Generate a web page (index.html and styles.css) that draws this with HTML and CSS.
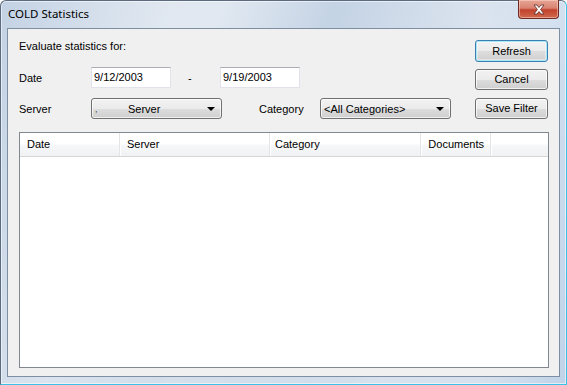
FILE: index.html
```html
<!doctype html>
<html lang="en">
<head>
    <meta charset="UTF-8">
    <title>COLD Statistics</title>
    <link rel="stylesheet" href="styles.css">
</head>
<body>
<div class="window">
    <div class="titlebar">
        <span class="title">COLD Statistics</span>
        <div class="close_btn">
            <svg width="14" height="11" viewBox="0 0 14 11">
                <path d="M2 1 L5 1 L7 3.5 L9 1 L12 1 L8.6 5.5 L12 10 L9 10 L7 7.5 L5 10 L2 10 L5.4 5.5 Z"
                      fill="#fff" stroke="#5a2a24" stroke-width="0.8" stroke-linejoin="round"/>
            </svg>
        </div>
    </div>

    <div class="client">
        <div class="top">
            <div class="filter_form">
                <div class="heading">Evaluate statistics for:</div>
                <div class="form_row date_row">
                    <span class="label">Date</span>
                    <div class="textbox">9/12/2003</div>
                    <span class="dash">-</span>
                    <div class="textbox">9/19/2003</div>
                </div>
                <div class="form_row">
                    <span class="label">Server</span>
                    <div class="combo server_combo">
                        <span class="combo_mark">,</span>
                        <span class="combo_text">Server</span>
                        <span class="combo_arrow"></span>
                    </div>
                    <span class="label category_label">Category</span>
                    <div class="combo category_combo">
                        <span class="combo_text">&lt;All Categories&gt;</span>
                        <span class="combo_arrow"></span>
                    </div>
                </div>
            </div>
            <div class="buttons">
                <div class="btn btn_default">Refresh</div>
                <div class="btn">Cancel</div>
                <div class="btn">Save Filter</div>
            </div>
        </div>

        <div class="list_view">
            <div class="list_header">
                <div class="col col_date">Date</div>
                <div class="col col_server">Server</div>
                <div class="col col_category">Category</div>
                <div class="col col_docs">Documents</div>
                <div class="col col_filler"></div>
            </div>
        </div>
    </div>
</div>
</body>
</html>
```

FILE: styles.css
```css
body {
    margin: 0;
    width: 567px;
    height: 385px;
    overflow: hidden;
    background-color: #ffffff;
    font-family: "Liberation Sans", Arial, sans-serif;
    font-size: 11px;
    color: #000;
}

.window {
    box-sizing: border-box;
    width: 567px;
    height: 385px;
    display: flex;
    flex-direction: column;
    border: 1px solid #5c6b7d;
    border-right-color: #3cc2e8;
    border-bottom-color: #3cc2e8;
    border-radius: 6px 6px 0 0;
    background:
        linear-gradient(115deg, rgba(255, 255, 255, 0) 0%, rgba(255, 255, 255, 0.35) 30%, rgba(255, 255, 255, 0) 45%,
            rgba(255, 255, 255, 0.3) 75%, rgba(255, 255, 255, 0) 100%),
        linear-gradient(to right, #c3d2e4, #d5dfeb 30%, #c4d3e5 60%, #d1dcea 85%, #bfd3e9);
    box-shadow: inset 0 0 0 1px rgba(255, 255, 255, 0.55);
}

.titlebar {
    height: 27px;
    display: flex;
    align-items: flex-start;
}

.title {
    font-family: "Noto Sans", "Open Sans", sans-serif;
    font-size: 11.5px;
    line-height: 16px;
    margin: 5px 0 0 7px;
    color: #000;
}

.close_btn {
    margin: -1px 7px 0 auto;
    width: 41px;
    height: 19px;
    box-sizing: border-box;
    border: 1px solid #6e2a22;
    border-top: none;
    border-radius: 0 0 4px 4px;
    background: linear-gradient(#e6a594 0%, #d98372 45%, #c2422e 55%, #cf6a4d 100%);
    box-shadow: inset 0 0 0 1px rgba(255, 220, 210, 0.5);
    display: flex;
    align-items: center;
    justify-content: center;
}

.client {
    flex: 1;
    margin: 0 6px 7px 6px;
    border: 1px solid #7f8fa3;
    background-color: #f0f0f0;
    padding: 11px 10px 8px 11px;
    display: flex;
    flex-direction: column;
}

.top {
    display: flex;
    justify-content: space-between;
}

.heading {
    line-height: 13px;
    height: 13px;
    margin-bottom: 14px;
}

.form_row {
    display: flex;
    align-items: center;
    height: 21px;
}

.date_row {
    margin-bottom: 10px;
}

.label {
    width: 72px;
}

.category_label {
    width: 61px;
    margin-left: 37px;
}

.textbox {
    box-sizing: border-box;
    width: 80px;
    height: 21px;
    padding: 3px 2px 0 2px;
    background-color: #fff;
    border: 1px solid #e2e3ea;
    border-top-color: #abadb3;
}

.dash {
    box-sizing: border-box;
    width: 49px;
    padding-left: 17px;
}

.combo,
.btn {
    box-sizing: border-box;
    border: 1px solid #707070;
    border-radius: 3px;
    background: linear-gradient(#f2f2f2 0%, #ebebeb 50%, #dddddd 51%, #cfcfcf 100%);
    box-shadow: inset 0 0 0 1px rgba(255, 255, 255, 0.7);
}

.combo {
    height: 21px;
    width: 131px;
    display: flex;
    align-items: center;
    padding: 0 6px 0 3px;
}

.combo_mark {
    color: #444;
    font-size: 9px;
    width: 33px;
}

.combo_text {
    flex: 1;
}

.combo_arrow {
    width: 0;
    height: 0;
    border-left: 4px solid transparent;
    border-right: 4px solid transparent;
    border-top: 4px solid #000;
}

.buttons {
    display: flex;
    flex-direction: column;
    gap: 8px;
    margin-right: 1px;
}

.btn {
    width: 73px;
    height: 21px;
    line-height: 19px;
    text-align: center;
}

.btn_default {
    height: 22px;
    line-height: 20px;
    border-color: #3c7fb1;
    box-shadow: inset 0 0 0 1px #a8e6f8, inset 0 0 0 2px rgba(255, 255, 255, 0.4);
    margin-bottom: -1px;
}

.list_view {
    flex: 1;
    margin-top: 13px;
    background-color: #fff;
    border: 1px solid #828790;
}

.list_header {
    height: 23px;
    display: flex;
    border-bottom: 1px solid #d5d5d5;
    background: linear-gradient(#ffffff 0%, #ffffff 45%, #f6f7f8 55%, #f1f2f4 100%);
}

.col {
    box-sizing: border-box;
    height: 23px;
    line-height: 23px;
    border-right: 1px solid #e3e4e6;
    box-shadow: 1px 0 0 #ffffff;
}

.col_date {
    width: 100px;
    padding-left: 7px;
}

.col_server {
    width: 150px;
    padding-left: 7px;
}

.col_category {
    width: 151px;
    padding-left: 5px;
}

.col_docs {
    width: 70px;
    text-align: right;
    padding-right: 6px;
}

.col_filler {
    flex: 1;
    border-right: none;
    box-shadow: none;
}
```
